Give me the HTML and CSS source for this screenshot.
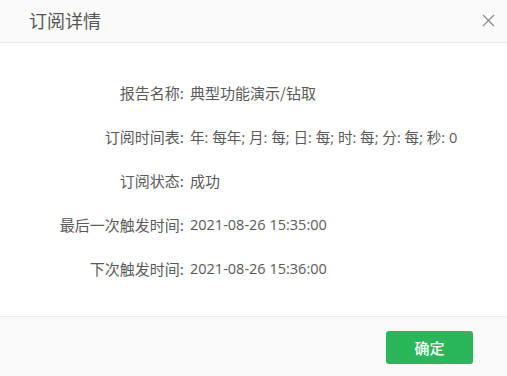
FILE: index.html
```html
<!DOCTYPE html>
<html lang="zh">
<head>
<meta charset="utf-8">
<title>订阅详情</title>
<link rel="stylesheet" href="styles.css">
</head>
<body>
<div class="dialog">
  <div class="header">
    <span class="title">订阅详情</span>
    <span class="close" aria-label="关闭">
      <svg width="13" height="13" viewBox="0 0 13 13"><path d="M1 1L12 12M12 1L1 12" stroke="#8c8c8c" stroke-width="1.2" fill="none"/></svg>
    </span>
  </div>
  <div class="body">
    <div class="row"><span class="label">报告名称:</span><span class="value cjk">典型功能演示/钻取</span></div>
    <div class="row"><span class="label">订阅时间表:</span><span class="value mixed">年: 每年; 月: 每; 日: 每; 时: 每; 分: 每; 秒: 0</span></div>
    <div class="row"><span class="label">订阅状态:</span><span class="value cjk">成功</span></div>
    <div class="row"><span class="label">最后一次触发时间:</span><span class="value">2021-08-26 15:35:00</span></div>
    <div class="row"><span class="label">下次触发时间:</span><span class="value">2021-08-26 15:36:00</span></div>
  </div>
  <div class="footer">
    <button class="btn-ok">确定</button>
  </div>
</div>
</body>
</html>
```
FILE: styles.css
```css
html, body {
  margin: 0;
  padding: 0;
  background: #ffffff;
}
body {
  font-family: "Open Sans", "Noto Sans CJK SC", sans-serif;
  color: #5a5a5a;
}
.dialog {
  width: 507px;
  display: flex;
  flex-direction: column;
}
.header {
  height: 42px;
  background: #fafafa;
  border-bottom: 1px solid #ebebeb;
  display: flex;
  align-items: center;
  justify-content: space-between;
  padding: 0 12px 0 29px;
  box-sizing: content-box;
}
.title {
  font-family: "Noto Sans CJK SC", sans-serif;
  font-size: 18px;
  color: #555555;
  margin-top: -2px;
}
.close {
  display: flex;
  align-items: center;
  margin-top: -2px;
}
.body {
  padding: 27px 0 26px;
  display: flex;
  flex-direction: column;
}
.row {
  display: grid;
  grid-template-columns: 184px 1fr;
  column-gap: 6px;
  height: 44px;
  align-items: center;
  font-size: 14.5px;
}
.label {
  text-align: right;
  font-family: "Noto Sans CJK SC", sans-serif;
  font-size: 15px;
}
.value {
  white-space: nowrap;
}
.value.cjk {
  font-family: "Noto Sans CJK SC", sans-serif;
  font-size: 15px;
}
.value.mixed {
  font-size: 14.6px;
}
.footer {
  border-top: 1px solid #ebebeb;
  background: #fafafa;
  padding: 14px 34px 14px;
  display: flex;
  justify-content: flex-end;
}
.btn-ok {
  width: 87px;
  height: 33px;
  border: none;
  border-radius: 3px;
  background: #2ab75a;
  color: #ffffff;
  font-family: "Noto Sans CJK SC", sans-serif;
  font-size: 15px;
  font-weight: 500;
  padding: 0;
}
```
